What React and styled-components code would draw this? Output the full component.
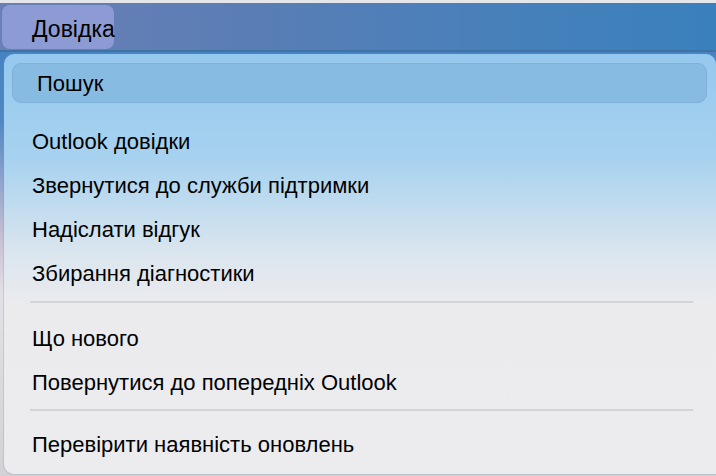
import React from "react";
import styled, { createGlobalStyle } from "styled-components";

const GlobalStyle = createGlobalStyle`
    html, body {
        margin: 0;
        padding: 0;
        width: 716px;
        height: 476px;
        overflow: hidden;
    }
    body {
        font-family: "Liberation Sans", Arial, sans-serif;
        background: #d9dbe3;
    }
`;

const Screen = styled.div`
    width: 716px;
    height: 476px;
    display: flex;
    flex-direction: column;
    background: linear-gradient(180deg, #3f7fc0 0%, #4f86c4 25%, #c9bfd4 50%, #e3dfe6 62%, #d2d2d6 100%);
`;

const MenuBar = styled.div`
    height: 47px;
    border-top: 3px solid #e4e6ea;
    border-bottom: 2px solid #3f73a3;
    display: flex;
    align-items: center;
    padding-left: 2px;
    background: linear-gradient(90deg, #6a7fb6 0%, #5a7db5 35%, #4a80ba 65%, #3a80bd 100%);
`;

const BarButton = styled.div`
    height: 44px;
    width: 112px;
    box-sizing: border-box;
    padding: 5px 0 0 30px;
    display: flex;
    align-items: center;
    border-radius: 8px;
    background: ${(p) => (p.$active ? "#8c9bd4" : "transparent")};
    color: #000;
    font-size: 23px;
    white-space: nowrap;
`;

const Panel = styled.div`
    flex: 1;
    margin: 2px 0 2px 4px;
    border-radius: 10px 10px 0 10px;
    background: linear-gradient(180deg, #95c8ee 0%, #a7d2ef 25%, #dce6ee 48%, #ebebee 60%, #ececef 100%);
    box-shadow: 0 0 0 1px rgba(120, 140, 170, 0.25);
    padding: 9px 9px 0 8px;
    display: flex;
    flex-direction: column;
`;

const Search = styled.div`
    height: 40px;
    box-sizing: border-box;
    border-radius: 9px;
    background: #88bbe2;
    border: 1px solid #7fb0d8;
    display: flex;
    align-items: center;
    padding: 2px 0 0 24px;
    font-size: 22px;
    color: #000;
`;

const Section = styled.div`
    display: flex;
    flex-direction: column;
    padding-top: ${(p) => p.$top || 0}px;
`;

const Item = styled.div`
    height: 44px;
    display: flex;
    align-items: center;
    padding: 1px 0 0 20px;
    box-sizing: border-box;
    font-size: 22px;
    color: #000;
    white-space: nowrap;
`;

const Divider = styled.div`
    height: 2px;
    margin: ${(p) => (p.$tight ? "5px 14px 11px 18px" : "6px 14px 13px 18px")};
    background: #d3d3d6;
`;

const App = () => (
    <>
        <GlobalStyle />
        <Screen>
            <MenuBar>
                <BarButton $active>Довідка</BarButton>
            </MenuBar>
            <Panel>
                <Search>Пошук</Search>
                <Section $top={16}>
                    <Item>Outlook довідки</Item>
                    <Item>Звернутися до служби підтримки</Item>
                    <Item>Надіслати відгук</Item>
                    <Item>Збирання діагностики</Item>
                </Section>
                <Divider />
                <Section>
                    <Item>Що нового</Item>
                    <Item>Повернутися до попередніх Outlook</Item>
                </Section>
                <Divider $tight />
                <Section>
                    <Item>Перевірити наявність оновлень</Item>
                </Section>
            </Panel>
        </Screen>
    </>
);

export default App;
